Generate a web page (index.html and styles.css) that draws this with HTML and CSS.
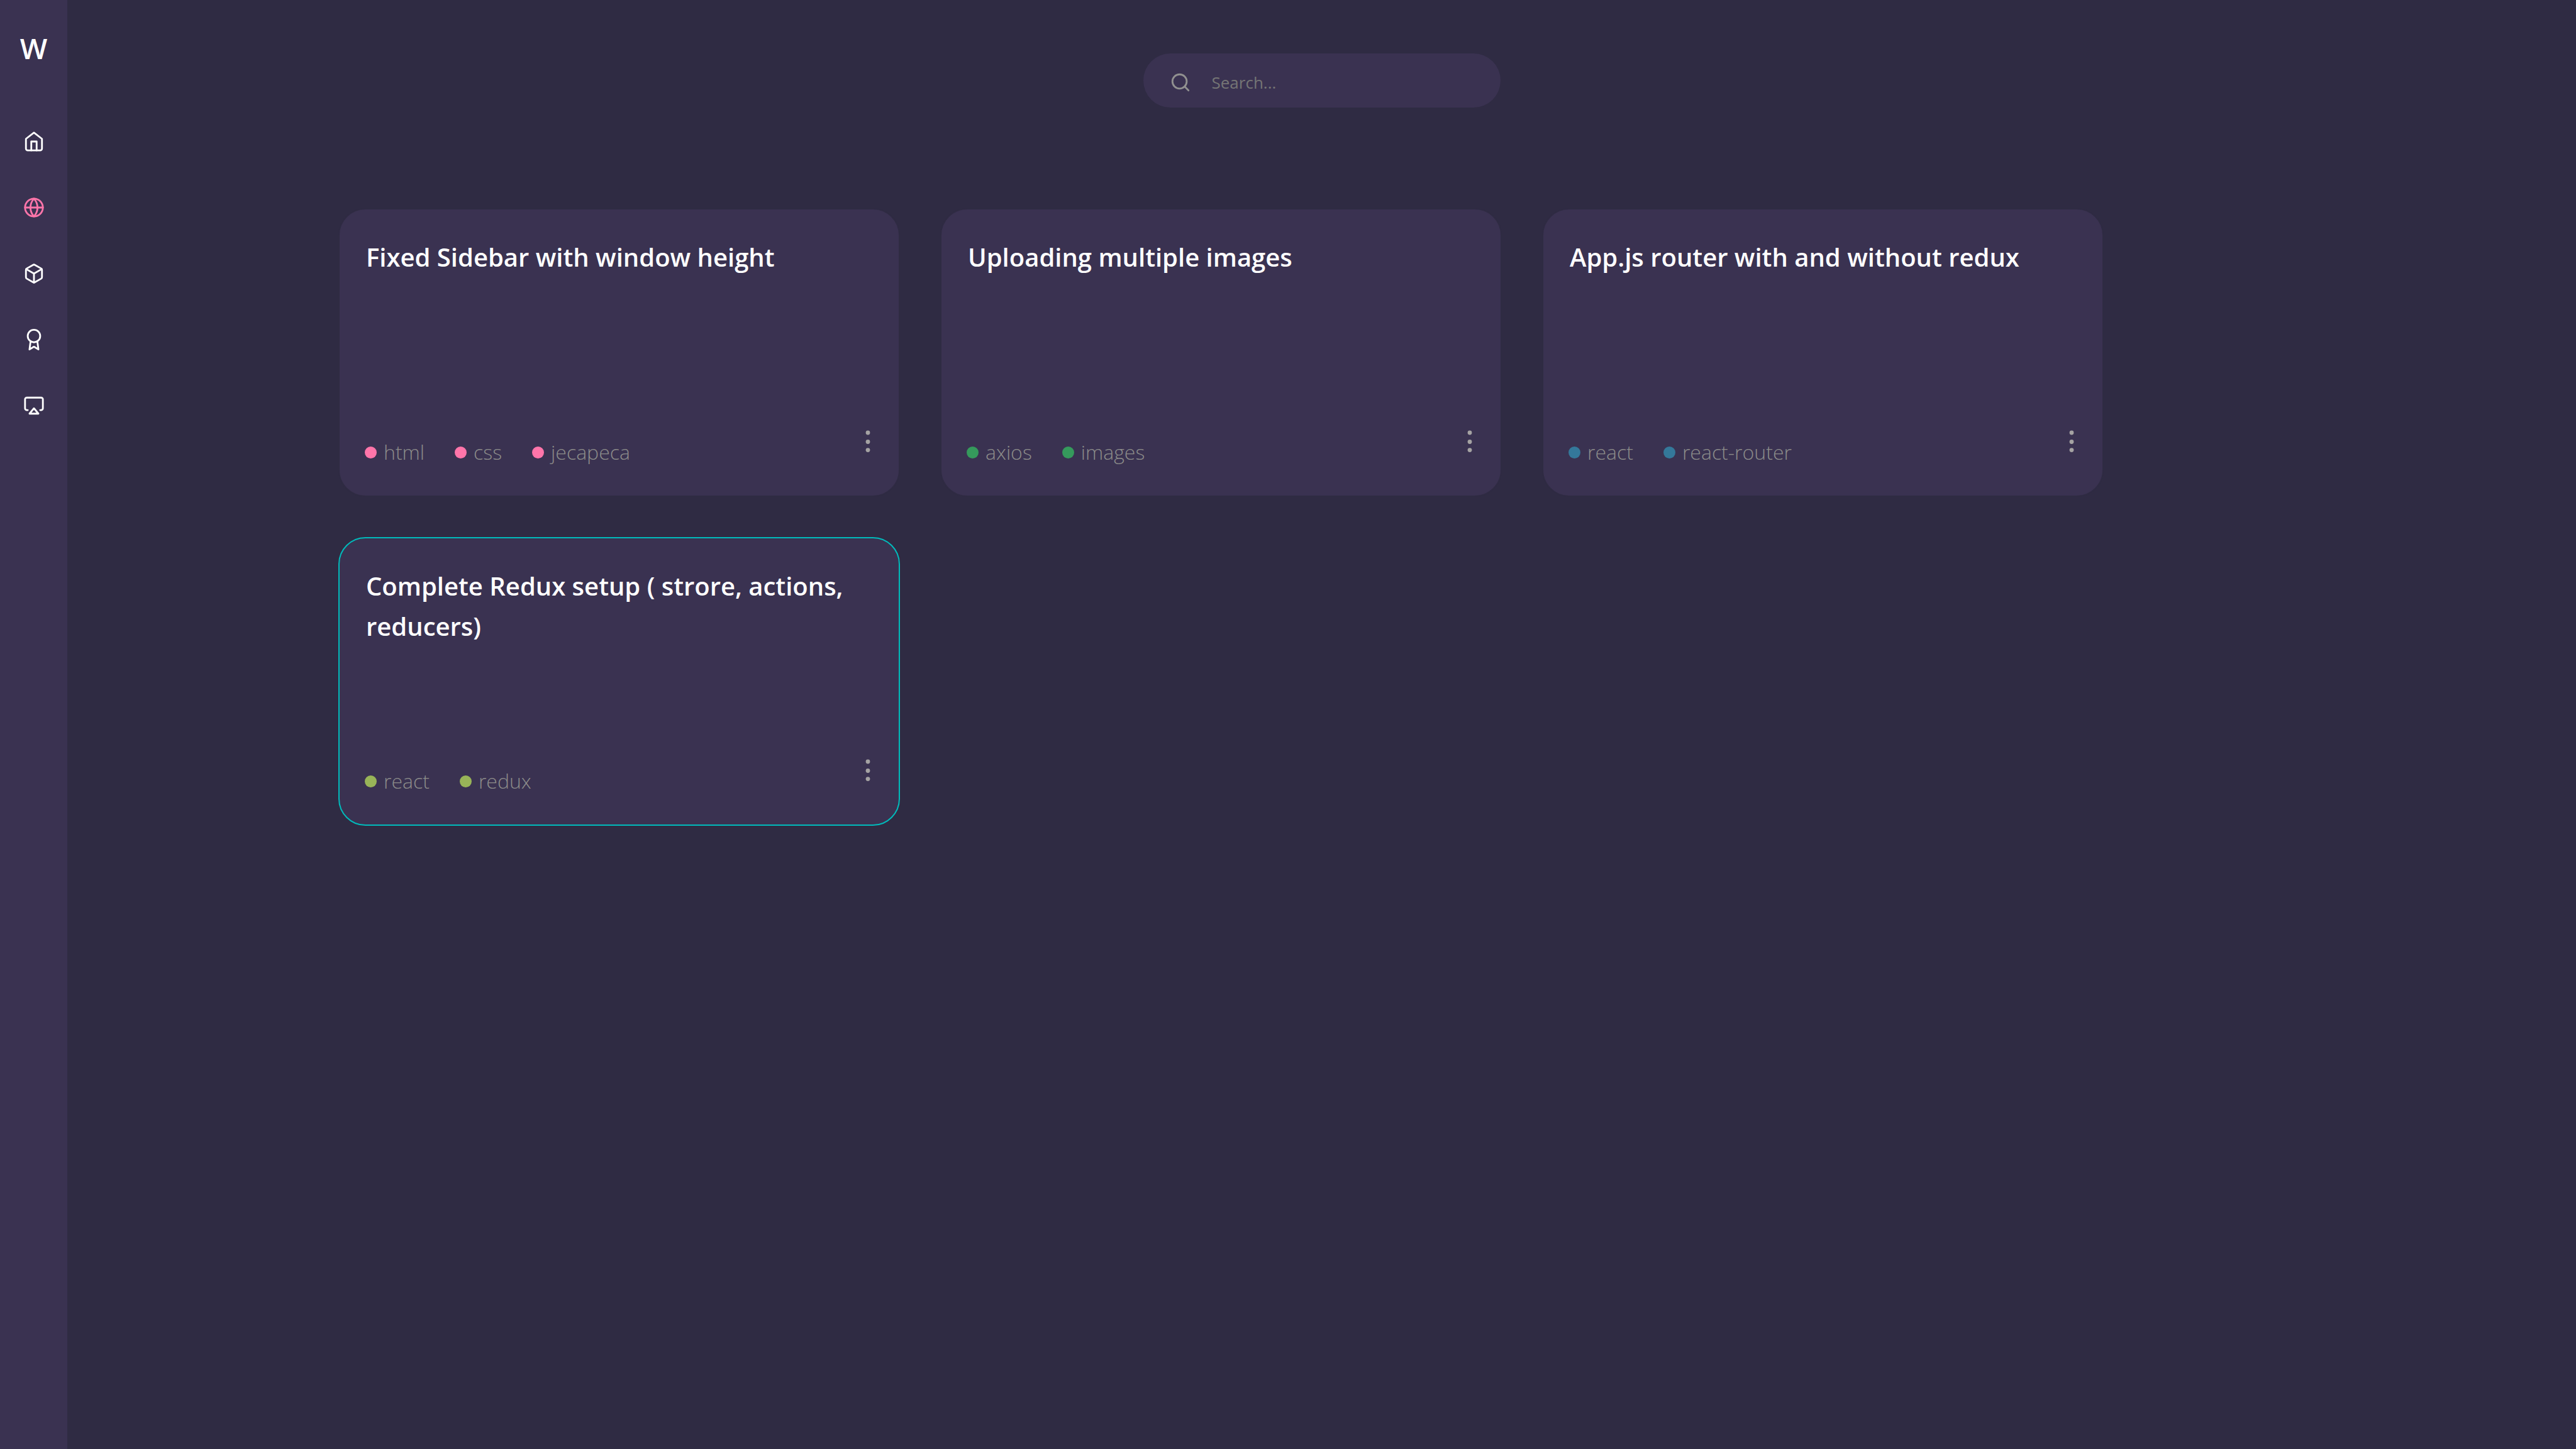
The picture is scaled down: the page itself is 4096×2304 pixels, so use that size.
FILE: index.html
```html
<!DOCTYPE html>
<html lang="en">
<head>
<meta charset="utf-8">
<title>Snippets</title>
<link rel="stylesheet" href="styles.css">
</head>
<body>
<div class="app">
  <aside class="sidebar">
    <a class="logo" href="#">W</a>
    <nav class="nav" aria-label="Main">
      <a class="nav-link" href="#" aria-label="Home"><svg class="icon" viewBox="0 0 24 24"><path d="M3 9l9-7 9 7v11a2 2 0 0 1-2 2H5a2 2 0 0 1-2-2z"/><path d="M9 22V12h6v10"/></svg></a>
      <a class="nav-link nav-link-active" href="#" aria-label="Web" aria-current="page"><svg class="icon" viewBox="0 0 24 24"><circle cx="12" cy="12" r="10"/><path d="M2 12h20"/><path d="M12 2a15.300 15.300 0 0 1 4 10 15.300 15.300 0 0 1-4 10 15.300 15.300 0 0 1-4-10 15.300 15.300 0 0 1 4-10z"/></svg></a>
      <a class="nav-link" href="#" aria-label="Packages"><svg class="icon" viewBox="0 0 24 24"><path d="M21 16V8a2 2 0 0 0-1-1.730l-7-4a2 2 0 0 0-2 0l-7 4A2 2 0 0 0 3 8v8a2 2 0 0 0 1 1.730l7 4a2 2 0 0 0 2 0l7-4A2 2 0 0 0 21 16z"/><path d="M3.270 6.960L12 12.010l8.730-5.050M12 22.080V12"/></svg></a>
      <a class="nav-link" href="#" aria-label="Awards"><svg class="icon" viewBox="0 0 24 24"><circle cx="12" cy="8" r="7"/><path d="M8.210 13.890L7 23l5-3 5 3-1.210-9.120"/></svg></a>
      <a class="nav-link" href="#" aria-label="Cast"><svg class="icon" viewBox="0 0 24 24"><path d="M5 17H4a2 2 0 0 1-2-2V5a2 2 0 0 1 2-2h16a2 2 0 0 1 2 2v10a2 2 0 0 1-2 2h-1"/><path d="M12 15l5 6H7z"/></svg></a>
    </nav>
  </aside>
  <main class="main">
    <form class="search" role="search">
      <svg class="icon" viewBox="0 0 24 24"><circle cx="11" cy="11" r="8"/><path d="M21 21l-4.350-4.350"/></svg>
      <input class="search-input" type="search" placeholder="Search..." aria-label="Search">
    </form>
    <section class="cards">
      <article class="card tone-pink">
        <h2 class="card-title">Fixed Sidebar with window height</h2>
        <footer class="card-footer">
          <ul class="tags"><li class="tag">html</li><li class="tag">css</li><li class="tag">jecapeca</li></ul>
          <button class="more" type="button" aria-label="More"><svg class="more-icon" viewBox="0 0 18 36"><circle cx="9" cy="4" r="3.400"/><circle cx="9" cy="18.500" r="3.400"/><circle cx="9" cy="31.600" r="3.400"/></svg></button>
        </footer>
      </article>
      <article class="card tone-green">
        <h2 class="card-title">Uploading multiple images</h2>
        <footer class="card-footer">
          <ul class="tags"><li class="tag">axios</li><li class="tag">images</li></ul>
          <button class="more" type="button" aria-label="More"><svg class="more-icon" viewBox="0 0 18 36"><circle cx="9" cy="4" r="3.400"/><circle cx="9" cy="18.500" r="3.400"/><circle cx="9" cy="31.600" r="3.400"/></svg></button>
        </footer>
      </article>
      <article class="card tone-blue">
        <h2 class="card-title">App.js router with and without redux</h2>
        <footer class="card-footer">
          <ul class="tags"><li class="tag">react</li><li class="tag">react-router</li></ul>
          <button class="more" type="button" aria-label="More"><svg class="more-icon" viewBox="0 0 18 36"><circle cx="9" cy="4" r="3.400"/><circle cx="9" cy="18.500" r="3.400"/><circle cx="9" cy="31.600" r="3.400"/></svg></button>
        </footer>
      </article>
      <article class="card card-selected tone-lime">
        <h2 class="card-title">Complete Redux setup ( strore, actions, reducers)</h2>
        <footer class="card-footer">
          <ul class="tags"><li class="tag">react</li><li class="tag">redux</li></ul>
          <button class="more" type="button" aria-label="More"><svg class="more-icon" viewBox="0 0 18 36"><circle cx="9" cy="4" r="3.400"/><circle cx="9" cy="18.500" r="3.400"/><circle cx="9" cy="31.600" r="3.400"/></svg></button>
        </footer>
      </article>
    </section>
  </main>
</div>
</body>
</html>
```
FILE: styles.css
```css
:root {
  --page: #2f2b43;
  --panel: #3a3251;
  --accent: #ff75aa;
  --muted: #8c8c8a;
}

* {
  box-sizing: border-box;
}

body {
  margin: 0;
  background: var(--page);
  color: #fff;
  font-family: "Open Sans", "Noto Sans", sans-serif;
}

.app {
  display: flex;
  min-height: 100vh;
}

.sidebar {
  flex: none;
  width: 107px;
  padding-top: 46px;
  background: var(--panel);
  display: flex;
  flex-direction: column;
  align-items: center;
}

.logo {
  color: #fff;
  font-size: 46px;
  font-weight: 600;
  line-height: 60px;
  text-decoration: none;
}

.nav {
  display: flex;
  flex-direction: column;
  gap: 71px;
  margin-top: 102px;
}

.nav-link {
  display: flex;
  color: #fff;
}

.nav-link-active {
  color: var(--accent);
}

.icon {
  flex: none;
  width: 34px;
  height: 34px;
  fill: none;
  stroke: currentColor;
  stroke-width: 2;
  stroke-linecap: round;
  stroke-linejoin: round;
}

.main {
  flex: 1;
  padding-top: 85px;
}

.search {
  display: flex;
  align-items: center;
  gap: 33px;
  width: 568px;
  height: 86px;
  margin: 0 auto 160px;
  padding: 6px 42px 0;
  border-radius: 43px;
  background: var(--panel);
  color: #919190;
}

.search-input {
  flex: 1;
  min-width: 0;
  padding: 0;
  border: 0;
  outline: 0;
  background: none;
  color: #fff;
  font-family: inherit;
  font-size: 26px;
  line-height: 40px;
}

.search-input::placeholder {
  color: #757575;
  opacity: 1;
}

.cards {
  display: grid;
  grid-template-columns: repeat(3, 1fr);
  grid-auto-rows: 459px;
  gap: 64px;
  margin: 0 751px 64px 431px;
}

.card {
  display: flex;
  flex-direction: column;
  justify-content: space-between;
  padding: 44px 40px;
  border: 2px solid var(--page);
  border-radius: 43px;
  background: var(--panel);
}

.card-selected {
  border-color: #00bbbb;
}

.card-title {
  margin: 0;
  padding-left: 2px;
  font-size: 40px;
  font-weight: 600;
  line-height: 64px;
}

.card-footer {
  display: flex;
  align-items: flex-end;
  justify-content: space-between;
}

.tags {
  display: flex;
  gap: 48px;
  margin: 0;
  padding: 0;
  list-style: none;
}

.tag {
  display: flex;
  align-items: center;
  gap: 11px;
  color: var(--muted);
  font-size: 32px;
  font-weight: 300;
  line-height: 50px;
}

.tag::before {
  content: "";
  width: 19px;
  height: 19px;
  border-radius: 50%;
  background: var(--tone);
}

.more {
  display: flex;
  margin-bottom: 24px;
  padding: 0;
  border: 0;
  background: none;
  color: #a5a3a3;
}

.more-icon {
  width: 18px;
  height: 36px;
  fill: currentColor;
}

.tone-pink {
  --tone: #ff75aa;
}

.tone-green {
  --tone: #359a5c;
}

.tone-blue {
  --tone: #34789a;
}

.tone-lime {
  --tone: #98b458;
}
```
